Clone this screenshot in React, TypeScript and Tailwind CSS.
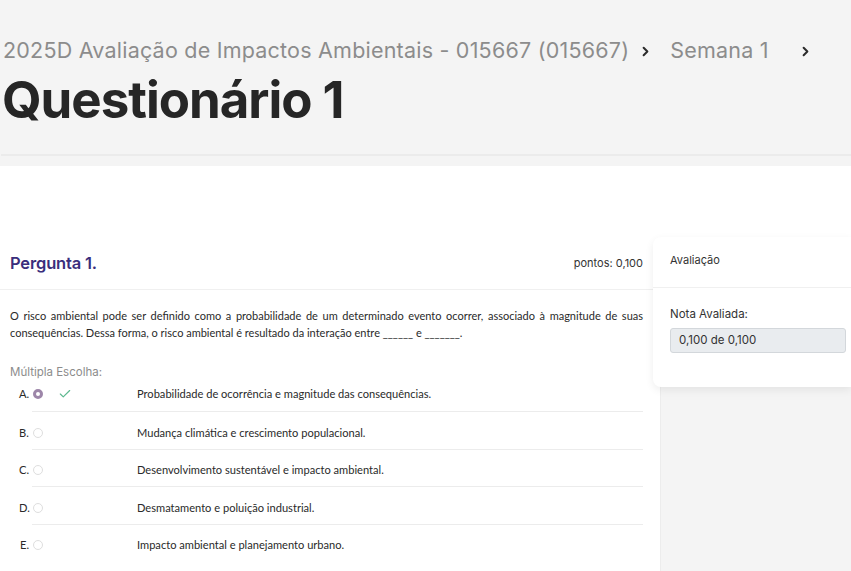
import React from "react";
import { ChevronRight, Check } from "lucide-react";

const options = [
  { l: "A.", t: "Probabilidade de ocorrência e magnitude das consequências.", sel: true },
  { l: "B.", t: "Mudança climática e crescimento populacional." },
  { l: "C.", t: "Desenvolvimento sustentável e impacto ambiental." },
  { l: "D.", t: "Desmatamento e poluição industrial." },
  { l: "E.", t: "Impacto ambiental e planejamento urbano." },
];

export default function App() {
  return (
    <div className="w-[851px] h-[571px] overflow-hidden bg-white font-['Inter',sans-serif] text-[#333]">
      <header className="bg-[#f4f4f4] h-[166px] pt-[38px]">
        <div className="pl-[3px] flex items-center h-[24px] text-[21.5px] text-[#8c8c8c] tracking-[0.01em]">
          <span>2025D Avaliação de Impactos Ambientais - 015667 (015667)</span>
          <ChevronRight className="ml-[9px] mt-[2px] text-[#2b2b2b]" size={15} strokeWidth={3.2} />
          <span className="ml-[17px]">Semana 1</span>
          <ChevronRight className="ml-[29px] mt-[2px] text-[#2b2b2b]" size={15} strokeWidth={3.2} />
        </div>
        <h1 className="pl-[2px] mt-[8px] text-[51px] leading-[60px] font-bold text-[#262626] tracking-[-0.02em]">
          Questionário 1
        </h1>
        <div className="ml-[1px] mt-[24px] h-[2px] bg-[#ebebeb]" />
      </header>
      <div className="h-[71px]" />
      <div className="flex h-[334px]">
        <main className="w-[660px] shrink-0">
          <div className="h-[53px] flex items-center justify-between pl-[10px] pr-[17px] border-b border-[#f0f0f0]">
            <h2 className="text-[16.5px] font-semibold text-[#3a2e7c] tracking-[-0.01em]">Pergunta 1.</h2>
            <span className="text-[11px] text-[#333]">pontos: 0,100</span>
          </div>
          <p className="pl-[10px] pr-[17px] pt-[17px] text-[11px] leading-[17px] text-justify font-['Lato',sans-serif] text-[#2a2a2a]">
            O risco ambiental pode ser definido como a probabilidade de um determinado evento ocorrer, associado à magnitude de suas consequências. Dessa forma, o risco ambiental é resultado da interação entre ______ e _______.
          </p>
          <div className="pl-[10px] mt-[23px] text-[11.5px] leading-[16px] text-[#8c8c8c]">Múltipla Escolha:</div>
          <div className="pl-[19px] pr-[17px]">
            {options.map((o, i) => (
              <div key={o.l} className="flex font-['Lato',sans-serif] text-[11.1px] text-[#2a2a2a]">
                <span className={`w-[13px] shrink-0 leading-[14px] ${i === 0 ? "pt-[7px]" : "pt-[13.5px]"} ${o.l === "E." ? "pl-[1px]" : ""}`}>{o.l}</span>
                <div className={`flex-1 flex items-center leading-[14px] ${i === 0 ? "pt-[7px] pb-[10px]" : "pt-[13.5px] pb-[9px]"} ${i < 4 ? "border-b border-[#ececec]" : ""}`}>
                  <span className="w-[11px] ml-[1px] flex items-center">
                    {o.sel ? (
                      <span className="w-[10px] h-[10px] rounded-full border-[3px] border-[#9d86a9] bg-white" />
                    ) : (
                      <span className="w-[10px] h-[10px] rounded-full border border-[#dedede] bg-white" />
                    )}
                  </span>
                  <span className="w-[93px] shrink-0 flex items-center">
                    {o.sel && <Check className="ml-[14px] text-[#5cb88f]" size={14} strokeWidth={2} />}
                  </span>
                  <span>{o.t}</span>
                </div>
              </div>
            ))}
          </div>
        </main>
        <aside className="flex-1 bg-[#f4f4f4] border-l border-[#ececec]">
          <div className="-ml-[8px] bg-white rounded-l-[8px] shadow-[0_3px_8px_rgba(0,0,0,0.07)] pb-[34px]">
            <div className="h-[51px] flex items-center pb-[4px] pl-[17px] border-b border-[#f0f0f0] text-[11px] text-[#333]">
              Avaliação
            </div>
            <div className="pl-[17px] pr-[5px] pt-[18px]">
              <div className="text-[11.5px] leading-[16px] text-[#333]">Nota Avaliada:</div>
              <div className="mt-[6px] h-[25px] flex items-center pl-[8px] bg-[#e9ecef] border border-[#d3d7db] rounded-[3px] text-[11.5px] text-[#333]">
                0,100 de 0,100
              </div>
            </div>
          </div>
        </aside>
      </div>
    </div>
  );
}
